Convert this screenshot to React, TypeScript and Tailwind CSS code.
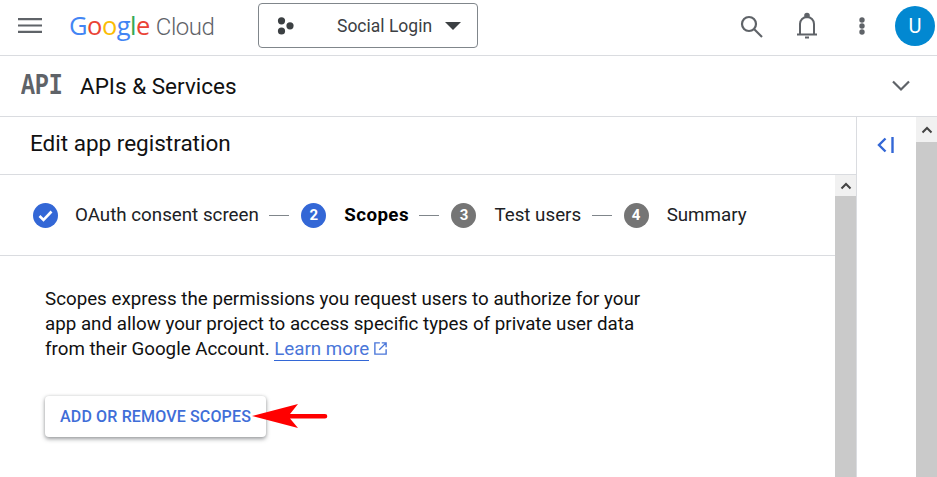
import React from "react";

const Step = ({ n, label, active }: { n: string; label: string; active?: boolean }) => (
  <div className="flex items-center">
    <span className={`flex h-[25px] w-[25px] items-center justify-center rounded-full text-[15px] font-bold text-white ${active ? "bg-[#3367d6]" : "bg-[#757575]"}`}>{n}</span>
    <span className={`ml-[18px] text-[18.75px] leading-6 ${active ? "font-bold tracking-[0.4px] text-black" : "text-[#202124]"}`}>{label}</span>
  </div>
);

const Line = () => <div className="ml-[10.5px] mr-[12px] h-px w-5 bg-[#80868b]" />;

const Chevron = ({ className }: { className?: string }) => (
  <svg viewBox="0 0 12 8" className={className} fill="none" stroke="#444" strokeWidth="2"><path d="M1.5 6.5 6 2l4.5 4.5" /></svg>
);

export default function App() {
  return (
    <div className="flex h-[477px] w-[937px] flex-col overflow-hidden bg-white font-['Roboto',sans-serif] text-[#202124]">
      <header className="flex h-[56px] shrink-0 items-center border-b border-[#dadce0] pb-1 pl-[18px]">
        <svg viewBox="0 0 24 15" className="h-[15px] w-6" fill="#5f6368"><path d="M0 0h24v2.2H0zM0 6.4h24v2.2H0zM0 12.8h24v2.2H0z" /></svg>
        <div className="ml-[27px] flex w-[147px] items-baseline text-[25.5px] leading-none tracking-[-0.5px] font-['Open_Sans',sans-serif]">
          <span className="text-[#4285f4]">G</span><span className="text-[#ea4335]">o</span><span className="text-[#fbbc05]">o</span><span className="text-[#4285f4]">g</span><span className="text-[#34a853]">l</span><span className="text-[#ea4335]">e</span>
          <span className="ml-[6px] font-['Roboto',sans-serif] text-[24px] font-light text-[#5f6368]">Cloud</span>
        </div>
        <div className="ml-[42px] flex h-[45px] w-[220px] items-center rounded border border-[#80868b] pl-[18px]">
          <svg viewBox="0 0 18 18" className="h-[18px] w-[18px]" fill="#3c4043"><circle cx="4.5" cy="3.8" r="3.6" /><circle cx="4.5" cy="14" r="3.6" /><circle cx="13" cy="8.8" r="3.6" /></svg>
          <span className="ml-[42px] mt-[2px] text-[17.5px] text-[#3c4043]">Social Login</span>
          <span className="ml-[13px] h-0 w-0 border-x-[8px] border-t-[8px] border-x-transparent border-t-[#3c4043]" />
        </div>
        <div className="ml-auto flex items-center pr-[2px]">
          <svg viewBox="0 0 24 24" className="h-[24px] w-[24px]" fill="none" stroke="#5f6368" strokeWidth="2.2"><circle cx="10" cy="10" r="7" /><path d="m15 15 8 8" /></svg>
          <svg viewBox="0 0 24 28" className="ml-[32px] h-[28px] w-[24px]" fill="none" stroke="#5f6368" strokeWidth="2"><path d="M2 22.5h20M5 22.5V12a7 7 0 0 1 14 0v10.5" /><circle cx="12" cy="3.5" r="1.8" fill="#5f6368" /><path d="M10 25.5h4" /></svg>
          <svg viewBox="0 0 6 18" className="ml-[40px] h-[18px] w-[6px]" fill="#5f6368"><circle cx="3" cy="3" r="2.7" /><circle cx="3" cy="9" r="2.7" /><circle cx="3" cy="15" r="2.7" /></svg>
          <div className="ml-[30px] flex h-10 w-10 items-center justify-center rounded-full bg-[#0288d1] text-[20px] text-white">U</div>
        </div>
      </header>

      <div className="flex h-[61px] shrink-0 items-center border-b border-[#dadce0] pl-[21px] pr-[27px]">
        <span className="w-[39px] origin-left scale-x-[0.8] font-['Liberation_Mono',monospace] text-[29px] font-bold leading-none text-[#5f6368]">API</span>
        <span className="ml-[20px] mt-[1px] text-[22.5px] text-[#111]">APIs &amp; Services</span>
        <svg viewBox="0 0 18 12" className="ml-auto h-3 w-[18px]" fill="none" stroke="#5f6368" strokeWidth="2.2"><path d="m1 1.5 8 8 8-8" /></svg>
      </div>

      <div className="flex min-h-0 flex-1">
        <main className="flex w-[857px] shrink-0 flex-col border-r border-[#dadce0]">
          <div className="flex h-[58px] shrink-0 items-center border-b border-[#dadce0] pb-[3px] pl-[30px]">
            <h1 className="text-[22.5px] font-normal text-[#111]">Edit app registration</h1>
          </div>
          <div className="flex min-h-0 flex-1">
            <div className="w-[835px] shrink-0">
              <div className="flex h-[81px] items-center border-b border-[#dadce0] pl-[33px]">
                <div className="flex items-center">
                  <svg viewBox="0 0 25 25" className="h-[25px] w-[25px]"><circle cx="12.5" cy="12.5" r="12.5" fill="#3367d6" /><path d="m6.5 13 4 4 8-8.5" fill="none" stroke="#fff" strokeWidth="2.6" /></svg>
                  <span className="ml-[17px] text-[18.75px] leading-6">OAuth consent screen</span>
                </div>
                <Line />
                <Step n="2" label="Scopes" active />
                <Line />
                <Step n="3" label="Test users" />
                <Line />
                <Step n="4" label="Summary" />
              </div>
              <div className="pl-[45px] pt-[31px]">
                <p className="w-[610px] text-[18.75px] leading-[25px] text-[#111]">
                  Scopes express the permissions you request users to authorize for your app and allow your project to access specific types of private user data from their Google Account.{" "}
                  <span className="border-b border-[#3367d6] text-[#4a76d9]">Learn more</span>
                  <svg viewBox="0 0 24 24" className="ml-[4px] inline h-[15px] w-[15px] align-[-1px]" fill="none" stroke="#4a76d9" strokeWidth="2.2"><path d="M11 3H3v18h18v-8M14 3h7v7M21 3 10 14" /></svg>
                </p>
                <div className="relative mt-[34px] w-fit">
                  <button className="flex h-[41px] w-[221px] items-center justify-center rounded bg-white text-[16px] font-medium tracking-[0.15px] text-[#3f6ed8] shadow-[0_2px_4px_rgba(60,64,67,0.5),0_0_3px_rgba(60,64,67,0.15)]">ADD OR REMOVE SCOPES</button>
                  <svg viewBox="0 0 76 24" className="absolute left-[207px] top-[8px] h-6 w-[76px]"><path d="M46 0 L0 12 L46 24 L38 14.5 H73 a2 2 0 0 0 0-4.6 H38 Z" fill="#ff0000" /></svg>
                </div>
              </div>
            </div>
            <div className="flex w-[21px] shrink-0 flex-col bg-[#cacaca]">
              <div className="flex h-[21px] items-center justify-center bg-[#f1f1f1]"><Chevron className="h-2 w-3" /></div>
            </div>
          </div>
        </main>
        <aside className="flex w-[59px] shrink-0 justify-center pr-[3px] pt-[20px]">
          <svg viewBox="0 0 17 16" className="h-[16px] w-[17px]" fill="none" stroke="#3367d6" strokeWidth="2.4"><path d="M8.5 1.5 2 8l6.5 6.5M15.5 0v16" /></svg>
        </aside>
        <div className="flex w-[21px] shrink-0 flex-col bg-[#cacaca]">
          <div className="flex h-[25px] items-center justify-center bg-[#f1f1f1]"><Chevron className="h-2 w-3" /></div>
        </div>
      </div>
    </div>
  );
}
